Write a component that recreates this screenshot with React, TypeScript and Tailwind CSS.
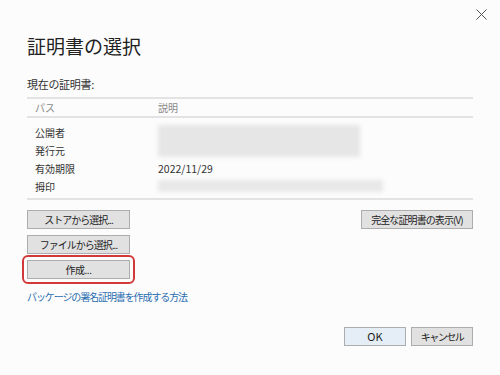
// Certificate selection dialog (証明書の選択)
const FONT = { fontFamily: '"Noto Sans CJK JP", "Noto Sans", sans-serif' };

function CloseIcon() {
  return (
    <svg aria-hidden="true" className="h-[11px] w-[11px]" viewBox="0 0 11 11" fill="none">
      <path d="M0.5 0.5l10 10M10.5 0.5l-10 10" stroke="#555" strokeWidth="1" />
    </svg>
  );
}

function Button({ label, className = '' }: { label: string; className?: string }) {
  return (
    <button
      className={[
        'flex h-[19px] items-center justify-center whitespace-nowrap',
        'border border-[#adadad] bg-[#e1e1e1] text-[10px] leading-none text-[#222]',
        className,
      ].join(' ')}
    >
      {label}
    </button>
  );
}

const ROWS = ['公開者', '発行元', '有効期限', '拇印'];

export default function App() {
  return (
    <div
      className="flex h-[375px] w-[500px] flex-col overflow-hidden bg-[#fcfcfc] text-[#333]"
      style={FONT}
    >
      {/* Title bar */}
      <div className="flex h-[27px] justify-end pr-[13px] pt-[9px]">
        <CloseIcon />
      </div>

      <div className="flex flex-1 flex-col px-[27px]">
        <h1 className="mt-[5px] text-[19px] leading-[28px] font-normal text-[#222]">証明書の選択</h1>

        <p className="mt-[17px] text-[11px] leading-[14px] tracking-[-0.3px]">現在の証明書:</p>

        {/* Certificate table */}
        <div className="mt-[6px] border-y-2 border-[#e3e3e3]">
          <div className="grid h-[19px] grid-cols-[123px_1fr] items-center border-b-2 border-[#e3e3e3] pl-[8px] text-[10px] text-[#888]">
            <span>パス</span>
            <span>説明</span>
          </div>
          <div className="relative grid grid-cols-[123px_1fr] pl-[8px] pt-[6px] pb-[2px] text-[10px] leading-[18px]">
            {ROWS.map((label, i) => (
              <div key={label} className="contents">
                <span>{label}</span>
                <span className="text-[10.5px]">{i === 2 ? '2022/11/29' : ''}</span>
              </div>
            ))}
            {/* redacted values */}
            <span className="absolute left-[131px] top-[7px] h-[32px] w-[202px] bg-[#e6e6e6] blur-[2px]" />
            <span className="absolute left-[131px] top-[62px] h-[12px] w-[225px] bg-[#e8e8e8] blur-[2px]" />
          </div>
        </div>

        {/* Actions */}
        <div className="mt-[10px] flex justify-between">
          <div className="flex flex-col gap-[6px]">
            <Button label="ストアから選択..." className="w-[103px] tracking-[-1px]" />
            <Button label="ファイルから選択..." className="w-[103px] tracking-[-1px]" />
            <div className="relative">
              <Button label="作成..." className="w-[103px] tracking-[-0.5px]" />
              <span className="pointer-events-none absolute -inset-x-[5px] -inset-y-[5px] rounded-[6px] border-2 border-[#d23a3a]" />
            </div>
          </div>
          <Button label="完全な証明書の表示(V)" className="w-[112px] tracking-[-0.9px]" />
        </div>

        <a className="mt-[11px] text-[10px] leading-[14px] tracking-[-1.1px] text-[#2a6cb0]">
          パッケージの署名証明書を作成する方法
        </a>

        <div className="mt-[23px] flex justify-end gap-[5px]">
          <Button label="OK" className="w-[62px] border-[#6aa0d4] bg-[#e5eef6] text-[11px]" />
          <Button label="キャンセル" className="w-[62px] tracking-[-1.5px]" />
        </div>
      </div>
    </div>
  );
}
